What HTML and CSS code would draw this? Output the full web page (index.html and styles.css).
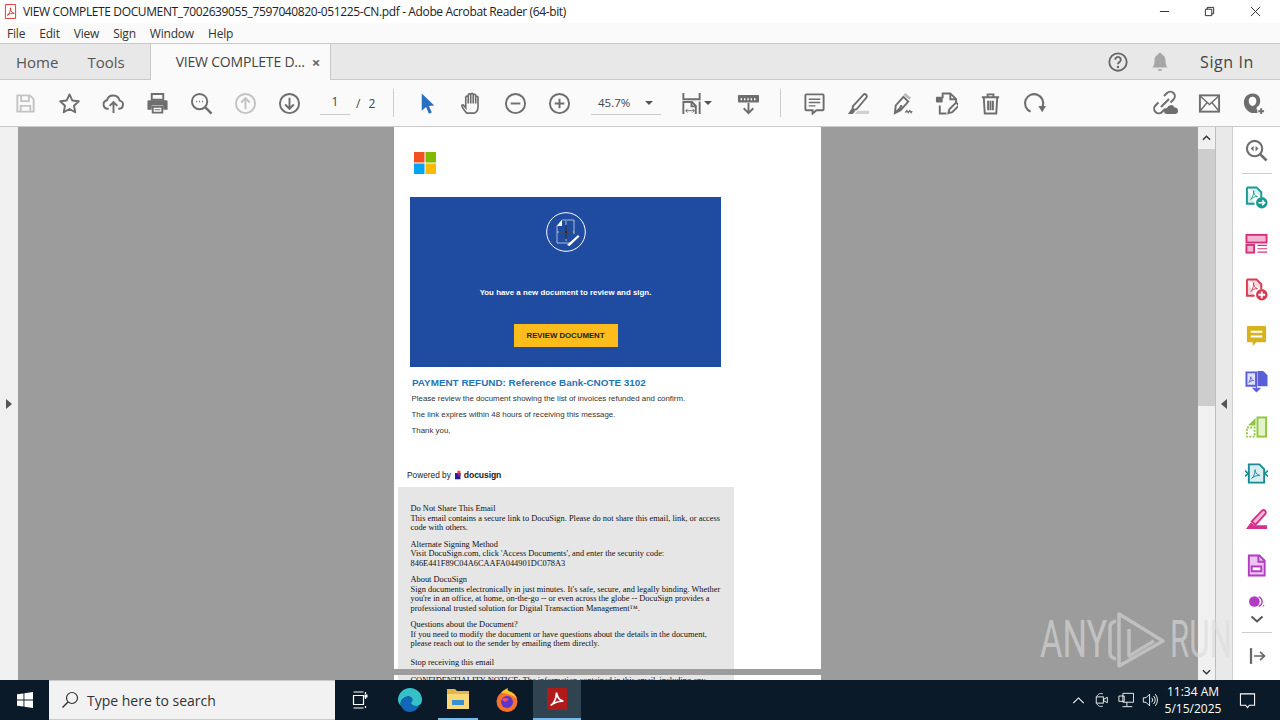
FILE: index.html
```html
<!DOCTYPE html>
<html lang="en">
<head>
<meta charset="utf-8">
<title>Adobe Acrobat Reader</title>
<link rel="stylesheet" href="styles.css">
</head>
<body>
<div class="app">
  <header class="titlebar">
    <svg class="app-icon" viewBox="0 0 14 16"><path d="M1.5.5h11v15h-11z" fill="#fff" stroke="#d8302a"/><path d="M3.5 12c2-1 3.500-4 3.500-8 0 4 2 6 4 6-3-.5-5 .5-7.500 2z" fill="none" stroke="#d8302a"/></svg>
    <span class="title-text">VIEW COMPLETE DOCUMENT_7002639055_7597040820-051225-CN.pdf - Adobe Acrobat Reader (64-bit)</span>
    <div class="win-btns">
      <span class="win-btn"><svg viewBox="0 0 12 12"><path d="M1 6h10" stroke="#222" fill="none"/></svg></span>
      <span class="win-btn"><svg viewBox="0 0 12 12"><path d="M1.500 3.500h7v7h-7zM3.500 3.500v-2h7v7h-2" stroke="#222" fill="none"/></svg></span>
      <span class="win-btn"><svg viewBox="0 0 12 12"><path d="M1 1l10 10M11 1L1 11" stroke="#222" fill="none"/></svg></span>
    </div>
  </header>
  <nav class="menubar">
    <span>File</span><span>Edit</span><span>View</span><span>Sign</span><span>Window</span><span>Help</span>
  </nav>
  <div class="tabbar">
    <span class="tab-link tab-home">Home</span>
    <span class="tab-link tab-tools">Tools</span>
    <div class="tab-active"><span>VIEW COMPLETE D...</span><b class="tab-close">×</b></div>
    <div class="tab-right">
      <svg class="i22" viewBox="0 0 24 24"><circle cx="12" cy="12" r="9.500" fill="none" stroke="#666" stroke-width="2"/><path d="M9 9.500a3 3 0 1 1 4.500 2.600c-1 .6-1.500 1-1.500 2.400" fill="none" stroke="#666" stroke-width="2"/><circle cx="12" cy="17.500" r="1.300" fill="#666"/></svg>
      <svg class="i22 bell" viewBox="0 0 24 24"><path d="M12 2c1.200 0 2 .8 2 1.800 3 1 4 3.500 4 7 0 4 1 5.500 2.500 7.200h-17C5 16.300 6 14.800 6 10.800c0-3.500 1-6 4-7C10 2.800 10.800 2 12 2zM9.800 19.500h4.400a2.200 2.200 0 0 1-4.400 0z" fill="#a6a6a6"/></svg>
      <span class="signin">Sign In</span>
    </div>
  </div>
  <div class="toolbar">
    <div class="tool-group">
      <span class="slot"><svg class="i24" viewBox="0 0 24 24"><path d="M3.500 3.500h13l4 4v13h-17z M7.500 3.500v6h8v-6 M7 20.500v-6h10v6" fill="none" stroke="#c4c4c4" stroke-width="2"/></svg></span>
      <span class="slot"><svg class="i24" viewBox="0 0 24 24"><path d="M12 2.500l2.900 6.300 6.800.8-5 4.700 1.300 6.800-6-3.400-6 3.400 1.300-6.800-5-4.700 6.800-.8z" fill="none" stroke="#6e6e6e" stroke-width="2" stroke-linejoin="round"/></svg></span>
      <span class="slot"><svg class="i24" viewBox="0 0 24 24"><path d="M7 17.500H6a4.500 4.500 0 0 1-.8-8.900 6.800 6.800 0 0 1 13.200.4 4.300 4.300 0 0 1-.4 8.500h-1M12 22V11M8 14.500l4-4 4 4" fill="none" stroke="#6e6e6e" stroke-width="2"/></svg></span>
      <span class="slot"><svg class="i24" viewBox="0 0 24 24"><path d="M6 2h12v6H6z" fill="none" stroke="#6e6e6e" stroke-width="2"/><path d="M3 8.500h18a1.500 1.500 0 0 1 1.500 1.500v8.500H18V14H6v4.500H1.500V10A1.500 1.500 0 0 1 3 8.500z" fill="#6e6e6e"/><path d="M7 15.500h10v6H7z" fill="none" stroke="#6e6e6e" stroke-width="2"/><path d="M9 18.500h6" stroke="#6e6e6e"/></svg></span>
      <span class="slot"><svg class="i24" viewBox="0 0 24 24"><circle cx="10" cy="10" r="8" fill="none" stroke="#6e6e6e" stroke-width="2"/><path d="M16 16l6.500 6.500" stroke="#6e6e6e" stroke-width="2.500"/><path d="M6.500 10h1M9.500 10h1M12.500 10h1" stroke="#6e6e6e" stroke-width="1.600"/></svg></span>
      <span class="slot"><svg class="i24" viewBox="0 0 24 24"><circle cx="12" cy="12" r="10" fill="none" stroke="#c4c4c4" stroke-width="2"/><path d="M12 18V6.500M7.500 11l4.500-4.500 4.500 4.500" fill="none" stroke="#c4c4c4" stroke-width="2"/></svg></span>
      <span class="slot"><svg class="i24" viewBox="0 0 24 24"><circle cx="12" cy="12" r="10" fill="none" stroke="#6e6e6e" stroke-width="2"/><path d="M12 6v11.500M7.500 13l4.500 4.500 4.500-4.500" fill="none" stroke="#6e6e6e" stroke-width="2"/></svg></span>
      <div class="pager"><span class="field">1</span><span class="sep-slash">/</span><span class="page-total">2</span></div>
    </div>
    <i class="vsep sep-a"></i>
    <div class="tool-group">
      <span class="slot"><svg class="i24" viewBox="0 0 24 24"><path d="M6 1.500L19 14l-5.500.5 3 7-3 1.200-3-7L6 19.500z" fill="#2a6fc0"/></svg></span>
      <span class="slot"><svg class="i24" viewBox="0 0 24 24"><path d="M7 22c-1.500-1.500-4-5-5-7-.6-1.200 1-2.200 2-1l2 2.500V5.500a1.300 1.300 0 0 1 2.600 0V3.300a1.300 1.300 0 0 1 2.600 0v-.5a1.300 1.300 0 0 1 2.600 0v.8a1.300 1.300 0 0 1 2.600 0v2a1.200 1.200 0 0 1 2.400 0V16c0 3-2 6-4 6z M8.600 5.500V12M11.200 3.300V12M13.800 3.200V12M16.400 3.600V12" fill="none" stroke="#6e6e6e" stroke-width="1.700"/></svg></span>
      <span class="slot"><svg class="i24" viewBox="0 0 24 24"><circle cx="12" cy="12" r="10" fill="none" stroke="#6e6e6e" stroke-width="2"/><path d="M7 12h10" stroke="#6e6e6e" stroke-width="2"/></svg></span>
      <span class="slot"><svg class="i24" viewBox="0 0 24 24"><circle cx="12" cy="12" r="10" fill="none" stroke="#6e6e6e" stroke-width="2"/><path d="M7 12h10M12 7v10" stroke="#6e6e6e" stroke-width="2"/></svg></span>
      <div class="zoombox"><span>45.7%</span><i class="caret"></i></div>
      <span class="slot slot-fit"><svg class="i24" viewBox="0 0 24 24"><path d="M3.500 1v6.500h17V1M3.500 23V10.500h9l4 4V23M12 10.500v4.500h4.500M20.500 23V10" fill="none" stroke="#6e6e6e" stroke-width="2"/><path d="M6 19.500h9M6 19.500l2-2M6 19.500l2 2M15 19.500l-2-2M15 19.500l-2 2" stroke="#6e6e6e" fill="none"/></svg><i class="caret caret-small"></i></span>
      <span class="slot slot-read"><svg class="i24" viewBox="0 0 24 24"><rect x="1" y="3" width="22" height="8" rx="1" fill="#6e6e6e"/><path d="M4.500 6.500v2M8 6.500v2M11.500 6.500v2M15 6.500v2M18.500 6.500v2" stroke="#fff" stroke-width="1.500"/><path d="M12 11.500V22M7 17l5 5 5-5" fill="none" stroke="#6e6e6e" stroke-width="2"/></svg></span>
    </div>
    <i class="vsep sep-b"></i>
    <div class="tool-group">
      <span class="slot"><svg class="i24" viewBox="0 0 24 24"><path d="M3.500 2.500h17a1 1 0 0 1 1 1v14.500a1 1 0 0 1-1 1H14l-4 3.500V19H3.500a1 1 0 0 1-1-1V3.500a1 1 0 0 1 1-1z" fill="none" stroke="#6e6e6e" stroke-width="2"/><path d="M6 7.500h12M6 11h12M6 14.500h7" stroke="#6e6e6e" stroke-width="1.500"/></svg></span>
      <span class="slot"><svg class="i24" viewBox="0 0 24 24"><path d="M8 23h15v-3.500H11z" fill="#d0d0d0"/><path d="M6 15L17.500 2.500c1.500-1 4 1 3 3L10 18l-4 1z" fill="none" stroke="#6e6e6e" stroke-width="2"/><path d="M1 23l4-6 3.500 3-2.500 3z" fill="#6e6e6e"/></svg></span>
      <span class="slot"><svg class="i24" viewBox="0 0 24 24"><path d="M4 22l1-8 8-9 5 5-8 9z M4 22l6-6" fill="none" stroke="#6e6e6e" stroke-width="2"/><circle cx="10.500" cy="15" r="1.500" fill="#6e6e6e"/><path d="M13 3l2-2 6 5-2 2z" fill="#bbb"/><path d="M15 21.500l1.500-2 1.500 2 1.500-2 1.500 2 1-1.500" fill="none" stroke="#6e6e6e" stroke-width="1.500"/></svg></span>
      <span class="slot"><svg class="i24" viewBox="0 0 24 24"><path d="M8 6.500V1.500h8l6 6v3M16 1.500v6h6M5 14v8.500h7" fill="none" stroke="#6e6e6e" stroke-width="2"/><rect x="1" y="5" width="7" height="6" rx="1" fill="#6e6e6e"/><path d="M14 22l1-4 7-7 3 3-7 7z" fill="none" stroke="#6e6e6e" stroke-width="2"/></svg></span>
      <span class="slot"><svg class="i24" viewBox="0 0 24 24"><path d="M3 5.500h18M9 5.500V2.500h6v3M5 5.500l1 17h12l1-17M9.500 9v10M12 9v10M14.500 9v10" fill="none" stroke="#6e6e6e" stroke-width="2"/></svg></span>
      <span class="slot"><svg class="i24" viewBox="0 0 24 24"><path d="M8 20.500A9.500 9.500 0 1 1 20.500 15" fill="none" stroke="#6e6e6e" stroke-width="2.200"/><path d="M16 14.500h8L20 21z" fill="#6e6e6e"/></svg></span>
    </div>
    <div class="tool-group tool-end">
      <span class="slot"><svg class="i24 i26" viewBox="0 0 26 26"><path d="M9 17l8-8M12 6l3-3a4.500 4.500 0 0 1 6.500 6.500l-3 3M13 19l-3 3a4.500 4.500 0 0 1-6.500-6.500l3-3" fill="none" stroke="#6e6e6e" stroke-width="2"/><path d="M15 24a3 3 0 0 1 0-6 4 4 0 0 1 7.500-.5 3.300 3.300 0 0 1 1 6.500z" fill="#6e6e6e"/></svg></span>
      <span class="slot"><svg class="i24" viewBox="0 0 24 24"><rect x="2" y="3.500" width="20" height="17" fill="none" stroke="#6e6e6e" stroke-width="2"/><path d="M2 4l10 9 10-9M2 20l7.500-9M22 20l-7.500-9" fill="none" stroke="#6e6e6e" stroke-width="1.500"/></svg></span>
      <span class="slot"><svg class="i24" viewBox="0 0 24 24"><path d="M11 1.500c5 0 8 3 8 7.500 0 3-1 5-3 6.500l-1 1.500 1 2v3H10c-5-2-8-6-8-11.500 0-5 4-9 9-9z" fill="#6e6e6e"/><path d="M11 5c2.600 0 4 2 4 4.500 0 3-2 5-4 5s-4-2-4-5C7 7 8.400 5 11 5z" fill="#fff"/><path d="M20 17v6M17 20h6" stroke="#6e6e6e" stroke-width="2"/></svg></span>
    </div>
  </div>
  <main class="workspace">
    <aside class="left-pane"><i class="tri tri-right"></i></aside>
    <section class="doc-area">
      <article class="page">
        <svg class="ms-logo" viewBox="0 0 22 22"><rect width="10.500" height="10.500" fill="#f25022"/><rect x="11.500" width="10.500" height="10.500" fill="#7fba00"/><rect y="11.500" width="10.500" height="10.500" fill="#00a4ef"/><rect x="11.500" y="11.500" width="10.500" height="10.500" fill="#ffb900"/></svg>
        <div class="hero">
          <svg class="hero-icon" viewBox="0 0 40 40"><circle cx="20" cy="20" r="19.300" fill="none" stroke="#fff" stroke-width="1"/><path d="M11 14l5-6h12v14M11 14v17h14M11 20h17M20 9v20" fill="none" stroke="#cfd8ee" stroke-width=".8"/><path d="M11 14l5-6v6z" fill="#fff"/><path d="M20 13v14M13 20h14" stroke="#0b1020" stroke-width="1.200"/><path d="M21 33l11-10 1.500 1.500-10 9.500z" fill="#fff"/></svg>
          <p class="hero-text">You have a new document to review and sign.</p>
          <span class="hero-btn">REVIEW DOCUMENT</span>
        </div>
        <h1 class="refund">PAYMENT REFUND: Reference Bank-CNOTE 3102</h1>
        <p class="body-line">Please review the document showing the list of invoices refunded and confirm.</p>
        <p class="body-line">The link expires within 48 hours of receiving this message.</p>
        <p class="body-line">Thank you,</p>
        <div class="powered"><span>Powered by</span><svg class="ds-mark" viewBox="0 0 9 11"><rect x="0" y="3" width="7" height="8" fill="#2b1a9c"/><rect x="3" y="0" width="4" height="4" fill="#e8503a"/><rect x="4" y="3" width="3" height="4" fill="#a01c7a"/></svg><b>docusign</b></div>
        <div class="notice">
          <p>Do Not Share This Email<br>This email contains a secure link to DocuSign. Please do not share this email, link, or access code with others.</p>
          <p>Alternate Signing Method<br>Visit DocuSign.com, click 'Access Documents', and enter the security code:<br>846E441F89C04A6CAAFA044901DC078A3</p>
          <p>About DocuSign<br>Sign documents electronically in just minutes. It's safe, secure, and legally binding. Whether you're in an office, at home, on-the-go -- or even across the globe -- DocuSign provides a professional trusted solution for Digital Transaction Management™.</p>
          <p>Questions about the Document?<br>If you need to modify the document or have questions about the details in the document, please reach out to the sender by emailing them directly.</p>
          <p class="stop">Stop receiving this email</p>
        </div>
      </article>
      <article class="page-two">
        <div class="notice notice-two"><p>CONFIDENTIALITY NOTICE: The information contained in this email, including any</p></div>
      </article>
    </section>
    <div class="scrollbar">
      <span class="sb-btn"><svg viewBox="0 0 10 6"><path d="M1 5l4-4 4 4" fill="none" stroke="#333" stroke-width="1.500"/></svg></span>
      <div class="sb-track"><i class="sb-thumb"></i></div>
      <span class="sb-btn"><svg viewBox="0 0 10 6"><path d="M1 1l4 4 4-4" fill="none" stroke="#333" stroke-width="1.500"/></svg></span>
    </div>
    <div class="collapse-pane"><i class="tri tri-left"></i></div>
    <aside class="rail">
      <span class="rail-top"><svg class="i24" viewBox="0 0 24 24"><circle cx="10" cy="10" r="8" fill="none" stroke="#6e6e6e" stroke-width="2.200"/><path d="M16 16l6.500 6.500" stroke="#6e6e6e" stroke-width="2.800"/><path d="M9 7l-3 3 3 3zM11 7l3 3-3 3z" fill="#6e6e6e"/></svg></span>
      <span class="rail-slot"><svg class="i24" viewBox="0 0 24 24"><path d="M2 1.500h10l5 5v5M2 1.500v17h8" fill="#d5eeee" stroke="#1a9a93" stroke-width="2"/><path d="M6 14c2-2 3-5 3-9 0 3 1 5 4 6-3 0-5 1-7 3z" fill="none" stroke="#1a9a93"/><circle cx="17.500" cy="17.500" r="6" fill="#1a9a93"/><path d="M14 17.500h6.500M18 15l2.500 2.500L18 20" fill="none" stroke="#fff" stroke-width="1.500"/></svg></span>
      <span class="rail-slot"><svg class="i24" viewBox="0 0 24 24"><rect x="1.500" y="3" width="21" height="8" fill="#f3b6d2" stroke="#d6317f" stroke-width="2"/><rect x="1.500" y="13.500" width="8" height="8" fill="#f3b6d2" stroke="#d6317f" stroke-width="2"/><path d="M13 14h10M13 17.500h10M13 21h10" stroke="#d6317f" stroke-width="1.200"/></svg></span>
      <span class="rail-slot"><svg class="i24" viewBox="0 0 24 24"><path d="M2 1.500h10l5 5v5M2 1.500v17h8" fill="#f8d8dc" stroke="#d83a52" stroke-width="2"/><path d="M6 14c2-2 3-5 3-9 0 3 1 5 4 6-3 0-5 1-7 3z" fill="none" stroke="#d83a52"/><circle cx="17.500" cy="17.500" r="6" fill="#d83a52"/><path d="M14 17.500h7M17.500 14v7" stroke="#fff" stroke-width="2"/></svg></span>
      <span class="rail-slot"><svg class="i24" viewBox="0 0 24 24"><path d="M3 2h18a1 1 0 0 1 1 1v15a1 1 0 0 1-1 1H12l-4 4v-4H3a1 1 0 0 1-1-1V3a1 1 0 0 1 1-1z" fill="#d9b31f"/><path d="M6 8h12M6 13h12" stroke="#fff" stroke-width="2"/></svg></span>
      <span class="rail-slot"><svg class="i24" viewBox="0 0 24 24"><path d="M1.500 2.500h10v14h-10z" fill="#dfe0fa" stroke="#5a5fd8" stroke-width="2"/><path d="M13 1h6l4.500 4.500V17H13z" fill="#5a5fd8"/><path d="M4 13c1.500-2 2-4 2-6 0 2 1 3 3 4-2 0-3.500 .5-5 2z" fill="none" stroke="#5a5fd8"/><path d="M12 13v7M8 19h8l-4 4z" fill="#5a5fd8" stroke="#5a5fd8"/></svg></span>
      <span class="rail-slot"><svg class="i24" viewBox="0 0 24 24"><rect x="13" y="1.500" width="9" height="20" fill="#e4f3cc" stroke="#8fc83b" stroke-width="2"/><path d="M2 12h8v9.500H2z" fill="none" stroke="#8fc83b" stroke-width="2" stroke-dasharray="2 1.500"/><path d="M11 2v8H3z" fill="#8fc83b"/></svg></span>
      <span class="rail-slot"><svg class="i24" viewBox="0 0 24 24"><path d="M4 2.500h11l5 5v14H4z" fill="#d8eef0" stroke="#1b8a93" stroke-width="2"/><path d="M7 17c2.500-2 3.500-5 3.500-9 0 3 1.500 5 5 6-3.500 0-6 1-8.500 3z" fill="none" stroke="#1b8a93"/><path d="M0 9l3 3-3 3M24 9l-3 3 3 3" fill="none" stroke="#1b8a93" stroke-width="1.800"/></svg></span>
      <span class="rail-slot"><svg class="i24" viewBox="0 0 24 24"><path d="M7 14L18 2.500c2-1.500 5 1.500 3.500 3.500L11 17.500z" fill="#f3b6d2" stroke="#d5318c" stroke-width="2"/><path d="M1 22l5-7 4 3h13v4z" fill="#d5318c"/></svg></span>
      <span class="rail-slot"><svg class="i24" viewBox="0 0 24 24"><path d="M4 1.500h11l5.500 5.500v15.500H4z" fill="#eec4f2" stroke="#b23bc4" stroke-width="2"/><path d="M14 2v6h6" fill="none" stroke="#b23bc4" stroke-width="2"/><rect x="7" y="13" width="10" height="5" fill="#fff" stroke="#b23bc4" stroke-width="2"/></svg></span>
      <span class="rail-clip"><svg class="i24 clip-icon" viewBox="0 0 24 24"><circle cx="9" cy="12" r="7.500" fill="#b23bc4"/><path d="M15 5a7.500 7.500 0 0 1 0 14" fill="none" stroke="#b23bc4" stroke-width="2"/><circle cx="22" cy="18" r="1" fill="#b23bc4"/></svg></span>
      <span class="rail-more"><svg viewBox="0 0 14 8"><path d="M1.500 1.500L7 6.500l5.500-5" fill="none" stroke="#555" stroke-width="2"/></svg></span>
      <span class="rail-last"><svg class="i22" viewBox="0 0 24 24"><path d="M4 1.500v21" stroke="#666" stroke-width="3"/><path d="M8 12h14M16 6.500l6 5.500-6 5.500" fill="none" stroke="#666" stroke-width="2.200"/></svg></span>
    </aside>
    <div class="watermark">
      <span class="wm-word">ANY</span>
      <svg class="wm-logo" viewBox="0 0 62 62"><path d="M10 12c-4 1-6 3-6 6v26c0 3 2 5 6 6M13 5v52l44-25zM23 20v27l25-15" fill="none" stroke="#d8d8d8" stroke-width="3.500" stroke-linejoin="round"/></svg>
      <span class="wm-word wm-run">RUN</span>
    </div>
  </main>
  <footer class="taskbar">
    <span class="start"><svg viewBox="0 0 16 16"><path d="M0 2.300l6.500-.9v6.200H0zM7.400 1.300L16 0v7.600H7.400zM0 8.400h6.500v6.200L0 13.700zM7.400 8.400H16V16l-8.600-1.300z" fill="#fff"/></svg></span>
    <div class="searchbox"><svg viewBox="0 0 18 18"><circle cx="11" cy="7" r="5.500" fill="none" stroke="#333" stroke-width="1.200"/><path d="M7 11l-5.500 5.500" stroke="#333" stroke-width="1.400"/></svg><span>Type here to search</span></div>
    <span class="tb-item tb-task"><svg viewBox="0 0 18 18"><path d="M3.500 1h10M3.500 4.500h10v9h-10zM3.500 17h10M15.500 1v2M15.500 6v2M15.500 15v2" fill="none" stroke="#fff" stroke-width="1.200"/><rect x="14.500" y="3.500" width="3" height="3" fill="#fff"/></svg></span>
    <span class="tb-item tb-edge"><svg viewBox="0 0 24 24"><path d="M12 0a12 12 0 0 1 12 12c0 4-3 6-6 6-3.500 0-5-1.500-5-3 0-.8.500-1.200 1-1.800.5-.7.500-1.700 0-2.700C13 8 9 8 6.500 9.500 3 11.500 2 15 3 18 1 16 0 14 0 12 0 5.500 5.500 0 12 0z" fill="#35c1c8"/><path d="M3 18c-1-3 0-6.500 3.500-8.500C9 8 13 8 14 10.500c.5 1 .5 2 0 2.700-.5.600-1 1-1 1.800 0 1.500 1.500 3 5 3 1.500 0 3-.5 4-1.500C20 21 16 24 12 24c-4 0-7-2-9-6z" fill="#1268b8"/></svg></span>
    <span class="tb-item tb-folder"><svg viewBox="0 0 24 22"><path d="M1 1h8l2 2h12v4H1z" fill="#e3b54a"/><path d="M1 6h22v15H1z" fill="#f8d878"/><path d="M6 12h12v5H6z" fill="#3a8fd0"/><path d="M10 17h4v4h-4z" fill="#f8d878"/></svg></span>
    <span class="tb-item tb-fox"><svg viewBox="0 0 24 24"><circle cx="12" cy="13.500" r="10.500" fill="#f4722b"/><path d="M6 5c2-3 5-4 7-5-1 2 0 3 3 4 3 1.500 5 4 6 7-3-3-7-5-16-6z" fill="#fbc02d"/><circle cx="12" cy="14" r="6" fill="#5c35c9"/><path d="M7 11c3-2 6-1 7 1-2 0-3 1-3 2-2 0-3-1-4-3z" fill="#ef4f6a"/></svg></span>
    <span class="tb-item tb-acro"><svg viewBox="0 0 22 24"><rect width="22" height="24" rx="1" fill="#b01a1a"/><path d="M4 19c4-2 6-8 6.500-14 .5 5 2.500 8 7.500 9.500-5-.5-9 1-14 4.500z" fill="none" stroke="#fff" stroke-width="1.800"/></svg></span>
    <div class="tray">
      <svg class="tray-caret" viewBox="0 0 14 8"><path d="M1 7l6-6 6 6" fill="none" stroke="#fff" stroke-width="1.200"/></svg>
      <svg class="tray-icon" viewBox="0 0 18 18"><path d="M3 5a6 6 0 0 1 7-3M3 13a6 6 0 0 0 7 3" fill="none" stroke="#ddd"/><rect x="2.500" y="5.500" width="8" height="7" fill="none" stroke="#fff"/><path d="M11 8l4-2v6l-4-2z" fill="none" stroke="#fff"/></svg>
      <svg class="tray-icon" viewBox="0 0 18 18"><path d="M5.500 1.500h12v10h-12zM1 4.500h6v6H1zM10 11.500V16M5 16.500h11" fill="#0a1a28" stroke="#fff"/></svg>
      <svg class="tray-icon tray-last" viewBox="0 0 18 18"><path d="M1.500 6.500h3l4-4v13l-4-4h-3z" fill="none" stroke="#fff"/><path d="M11 6.500a4 4 0 0 1 0 5M13 4.500a7 7 0 0 1 0 9M15 2.500a10 10 0 0 1 0 13" fill="none" stroke="#fff"/></svg>
      <div class="clock"><span>11:34 AM</span><span>5/15/2025</span></div>
      <svg class="tray-note" viewBox="0 0 18 18"><path d="M1.500 2h15v12H11l-2 2.500L7 14H1.500z" fill="none" stroke="#fff" stroke-width="1.100"/></svg>
    </div>
  </footer>
</div>
</body>
</html>
```
FILE: styles.css
```css
* { box-sizing: border-box; }
html, body { margin: 0; padding: 0; }
body { width: 1280px; height: 720px; overflow: hidden; font-family: "Open Sans", "Liberation Sans", sans-serif; color: #222; }
svg { display: block; flex: none; }
.app { display: flex; flex-direction: column; width: 1280px; height: 720px; }

.titlebar { height: 23px; background: #fff; display: flex; align-items: center; padding-left: 4px; font-size: 12px; flex: none; }
.app-icon { width: 13px; height: 15px; margin-right: 6px; }
.title-text { letter-spacing: -.375px; white-space: nowrap; }
.win-btns { margin-left: auto; display: flex; padding-right: 2px; }
.win-btn { width: 45.500px; height: 23px; display: flex; align-items: center; justify-content: center; }
.win-btn svg { width: 11px; height: 11px; }

.menubar { height: 21px; background: #fafafa; border-bottom: 1px solid #c9c9c9; display: flex; align-items: center; padding-left: 7px; gap: 14px; font-size: 12px; letter-spacing: -.2px; flex: none; color: #333; }

.tabbar { height: 36px; background: #e8e8e8; display: flex; align-items: center; border-bottom: 1px solid #c9c9c9; flex: none; color: #555; }
.tab-link { font-size: 15px; }
.tab-home { margin-left: 16px; }
.tab-tools { margin-left: 29px; }
.tab-active { margin-left: 25px; width: 181px; height: 36px; background: #fafafa; border-left: 1px solid #c9c9c9; border-right: 1px solid #c9c9c9; display: flex; align-items: center; padding-left: 25px; font-size: 14px; letter-spacing: -.2px; color: #444; white-space: nowrap; }
.tab-close { margin-left: 7px; font-size: 15px; color: #666; }
.tab-right { margin-left: auto; display: flex; align-items: center; padding-right: 26px; }
.i22 { width: 22px; height: 22px; }
.bell { margin-left: 20px; }
.signin { margin-left: 29px; font-size: 16px; letter-spacing: .6px; color: #444; }

.toolbar { height: 47px; background: #fafafa; border-bottom: 1px solid #c9c9c9; display: flex; align-items: center; padding-left: 3px; flex: none; }
.tool-group { display: flex; align-items: center; }
.tool-end { margin-left: auto; padding-right: 5px; }
.slot { width: 44px; height: 46px; display: flex; align-items: center; justify-content: center; position: relative; }
.i24 { width: 23px; height: 23px; }
.i26 { width: 26px; height: 26px; }
.pager { display: flex; align-items: center; font-size: 12px; color: #444; width: 82px; }
.field { width: 30px; margin-left: 9px; height: 24px; line-height: 22px; text-align: center; border-bottom: 1px solid #ccc; }
.sep-slash { margin-left: 6px; }
.page-total { margin-left: 8px; }
.vsep { width: 1px; height: 28px; background: #ccc; display: block; }
.sep-a { margin-left: 0; margin-right: 11px; }
.sep-b { margin-left: 10px; margin-right: 11px; }
.zoombox { width: 70px; margin-left: 10px; height: 24px; display: flex; align-items: center; padding-left: 7px; font-size: 11.500px; color: #444; border-bottom: 1px solid #ccc; }
.caret { display: block; width: 0; height: 0; border-left: 4px solid transparent; border-right: 4px solid transparent; border-top: 4px solid #555; margin-left: 15px; }
.slot-fit { margin-left: 8px; width: 44px; }
.caret-small { position: absolute; right: 1px; top: 21px; margin: 0; }
.slot-read { margin-left: 13px; width: 44px; }

.workspace { flex: 1; min-height: 0; display: flex; position: relative; background: #9c9c9c; overflow: hidden; }
.left-pane { width: 18px; background: #f0f0f0; display: flex; align-items: center; justify-content: center; flex: none; }
.tri { display: block; width: 0; height: 0; border-top: 5px solid transparent; border-bottom: 5px solid transparent; }
.tri-right { border-left: 6px solid #555; }
.tri-left { border-right: 6px solid #555; }
.doc-area { flex: 1; min-width: 0; display: flex; flex-direction: column; align-items: center; overflow: hidden; }
.page { width: 427px; height: 542px; flex: none; background: #fff; padding-top: 25px; font-family: "Liberation Sans", Arial, sans-serif; overflow: hidden; margin-right: 1px; }
.page-two { width: 427px; height: 20px; flex: none; background: #fff; margin-top: 6px; margin-right: 1px; font-family: "Liberation Serif", serif; overflow: hidden; }
.ms-logo { width: 22px; height: 22px; margin-left: 20px; }
.hero { width: 311px; height: 170px; margin: 23px 0 0 16px; background: #1f4ba0; display: flex; flex-direction: column; align-items: center; padding-top: 15px; }
.hero-icon { width: 40px; height: 40px; }
.hero-text { margin: 35px 0 0; color: #fff; font-size: 7.900px; font-weight: bold; line-height: 12px; }
.hero-btn { margin-top: 25px; width: 104px; height: 23px; background: #fbbc1c; color: #222; font-size: 7.800px; font-weight: bold; display: flex; align-items: center; justify-content: center; }
.refund { margin: 10px 0 0 18px; font-size: 9.900px; line-height: 12px; color: #1f73b7; font-weight: bold; }
.body-line { margin: 4px 0 0 17.500px; font-size: 7.900px; line-height: 12px; color: #333; }
.powered { margin: 32px 0 0 13px; height: 12px; display: flex; align-items: center; font-size: 8.300px; color: #222; }
.ds-mark { width: 7px; height: 10px; margin: 0 2px 0 4px; }
.powered b { font-size: 8.600px; font-weight: bold; letter-spacing: -.1px; }
.notice { width: 336px; margin: 6px 0 0 4px; background: #e6e6e6; padding: 17px 10px 0 12.500px; font-family: "Liberation Serif", serif; font-size: 8.400px; line-height: 9.500px; color: #111; height: 200px; }
.notice p { margin: 0 0 7px; }
.notice .stop { margin-top: 9.500px; }
.notice-two { margin-top: 0; padding-top: 1px; height: 20px; }

.scrollbar { width: 17px; background: #f0f0f0; display: flex; flex-direction: column; flex: none; }
.sb-btn { height: 17px; background: #f0f0f0; display: flex; align-items: center; justify-content: center; flex: none; }
.sb-btn svg { width: 9px; height: 6px; }
.sb-btn:first-child { height: 22px; }
.sb-track { flex: 1; min-height: 0; }
.sb-thumb { display: block; height: 257px; background: #cdcdcd; }
.collapse-pane { width: 18px; background: #e9e9e9; border-left: 1px solid #bdbdbd; border-right: 1px solid #d0d0d0; display: flex; align-items: center; justify-content: center; flex: none; }
.rail { width: 47px; background: #fff; display: flex; flex-direction: column; align-items: center; flex: none; }
.rail-top { height: 47px; width: 30px; border-bottom: 1px solid #ccc; display: flex; align-items: center; justify-content: center; flex: none; }
.rail-slot { height: 46px; width: 47px; display: flex; align-items: center; justify-content: center; flex: none; }
.rail-clip { height: 23px; width: 47px; overflow: hidden; display: flex; justify-content: center; flex: none; }
.clip-icon { margin-top: 5px; height: 17px; width: 17px; }
.rail-more { height: 22px; display: flex; align-items: center; border-bottom: 1px solid #ccc; width: 30px; justify-content: center; flex: none; padding-bottom: 5px; }
.rail-more svg { width: 14px; height: 8px; }
.rail-last { height: 46px; display: flex; align-items: center; justify-content: center; flex: none; }
.rail-last svg { width: 18px; height: 18px; }

.watermark { position: absolute; left: 1040px; top: 482px; display: flex; align-items: center; height: 62px; opacity: .6; color: #dcdcdc; pointer-events: none; }
.wm-word { display: block; font-family: Roboto, "Liberation Sans", sans-serif; font-weight: 400; font-size: 52px; line-height: 62px; width: 66px; transform: scaleX(.66); transform-origin: left center; white-space: nowrap; }
.wm-logo { width: 62px; height: 62px; margin: 0 2px 0 0; }
.wm-run { width: 60px; transform: scaleX(.6); }

.taskbar { height: 40px; background: #0a1a28; display: flex; align-items: center; flex: none; color: #fff; }
.start { width: 49px; height: 40px; display: flex; align-items: center; justify-content: center; }
.start svg { width: 16px; height: 16px; }
.searchbox { width: 286px; height: 40px; background: #f2f2f2; border-top: 1px solid #ccc; border-bottom: 1px solid #ccc; display: flex; align-items: center; padding-left: 12px; color: #333; font-size: 14px; }
.searchbox svg { width: 18px; height: 18px; margin-right: 8px; }
.tb-item { height: 40px; display: flex; align-items: center; justify-content: center; flex: none; }
.tb-task { width: 48px; }
.tb-task svg { width: 18px; height: 18px; }
.tb-edge { width: 48px; margin-left: 3px; }
.tb-edge svg { width: 24px; height: 24px; }
.tb-folder { width: 40px; border-bottom: 2px solid #76b9ed; margin: 0 4px; }
.tb-folder svg { width: 24px; height: 22px; }
.tb-fox { width: 50px; }
.tb-fox svg { width: 24px; height: 24px; }
.tb-acro { width: 48px; background: #2f4351; border-bottom: 2px solid #76b9ed; margin-left: 1px; }
.tb-acro svg { width: 20px; height: 22px; }
.tray { margin-left: auto; display: flex; align-items: center; padding-right: 24px; }
.tray-caret { width: 13px; height: 7px; margin-right: 9px; }
.tray-icon { width: 16px; height: 16px; margin-right: 8px; }
.tray-last { margin-right: 0; }
.clock { display: flex; flex-direction: column; align-items: center; width: 70px; font-size: 12px; line-height: 17px; }
.tray-note { width: 17px; height: 17px; margin-left: 11px; }
```
